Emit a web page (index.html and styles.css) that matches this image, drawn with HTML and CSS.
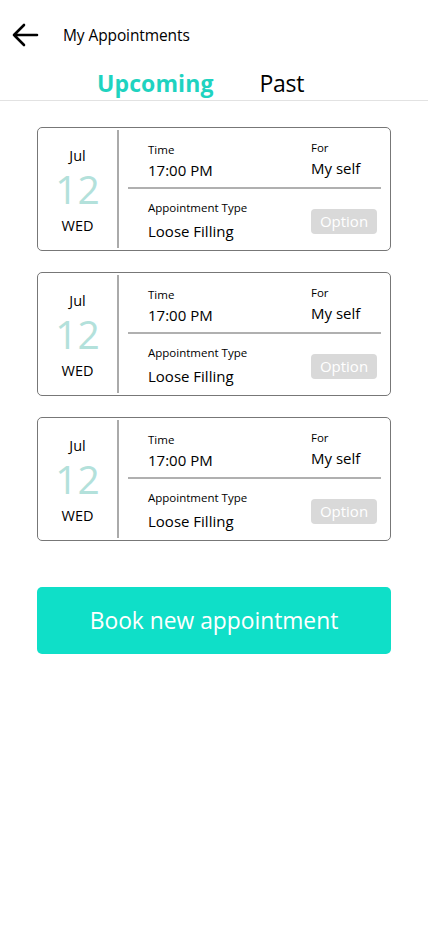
FILE: index.html
```html
<!DOCTYPE html>
<html lang="en">
<head>
<meta charset="utf-8">
<title>My Appointments</title>
<link rel="stylesheet" href="styles.css">
</head>
<body>
<header class="topbar">
  <svg class="back" width="28" height="24" viewBox="0 0 28 24"><path d="M13 2 L3 12 L13 22 M3 12 H26" fill="none" stroke="#000" stroke-width="2.6" stroke-linecap="round" stroke-linejoin="round"/></svg>
  <span class="title">My Appointments</span>
</header>
<nav class="tabs">
  <span class="tab active">Upcoming</span>
  <span class="tab">Past</span>
</nav>
<main class="list">
  <div class="card">
    <div class="date"><span class="mon">Jul</span><span class="day">12</span><span class="dow">WED</span></div>
    <div class="vline"></div>
    <div class="info">
      <div class="row top">
        <div class="cell"><span class="lbl">Time</span><span class="val">17:00 PM</span></div>
        <div class="cell side"><span class="lbl">For</span><span class="val">My self</span></div>
      </div>
      <div class="row bottom">
        <div class="cell"><span class="lbl">Appointment Type</span><span class="val">Loose Filling</span></div>
        <div class="cell side"><span class="opt">Option</span></div>
      </div>
    </div>
  </div>
  <div class="card">
    <div class="date"><span class="mon">Jul</span><span class="day">12</span><span class="dow">WED</span></div>
    <div class="vline"></div>
    <div class="info">
      <div class="row top">
        <div class="cell"><span class="lbl">Time</span><span class="val">17:00 PM</span></div>
        <div class="cell side"><span class="lbl">For</span><span class="val">My self</span></div>
      </div>
      <div class="row bottom">
        <div class="cell"><span class="lbl">Appointment Type</span><span class="val">Loose Filling</span></div>
        <div class="cell side"><span class="opt">Option</span></div>
      </div>
    </div>
  </div>
  <div class="card">
    <div class="date"><span class="mon">Jul</span><span class="day">12</span><span class="dow">WED</span></div>
    <div class="vline"></div>
    <div class="info">
      <div class="row top">
        <div class="cell"><span class="lbl">Time</span><span class="val">17:00 PM</span></div>
        <div class="cell side"><span class="lbl">For</span><span class="val">My self</span></div>
      </div>
      <div class="row bottom">
        <div class="cell"><span class="lbl">Appointment Type</span><span class="val">Loose Filling</span></div>
        <div class="cell side"><span class="opt">Option</span></div>
      </div>
    </div>
  </div>
  <button class="book">Book new appointment</button>
</main>
</body>
</html>
```
FILE: styles.css
```css
* { box-sizing: border-box; }
body {
  margin: 0;
  background: #fff;
  font-family: "Open Sans", "Noto Sans", sans-serif;
  color: #000;
}
.topbar {
  display: flex;
  align-items: center;
  height: 70px;
  padding-left: 11px;
}
.back { display: block; }
.title {
  margin-left: 24px;
  font-size: 15.5px;
  letter-spacing: -0.1px;
}
.tabs {
  display: flex;
  justify-content: flex-start;
  gap: 46px;
  height: 31px;
  align-items: center;
  border-bottom: 1px solid #e2e2e2;
  padding-left: 97px;
}
.tab {
  font-size: 23px;
  line-height: 31px;
  position: relative;
  top: -2px;
}
.tab.active {
  color: #1fd3c0;
  font-weight: 700;
  letter-spacing: 0.1px;
}
.tab + .tab { letter-spacing: -0.3px; }
.list {
  display: flex;
  flex-direction: column;
  gap: 21px;
  padding: 26px 37px 0 37px;
}
.card {
  display: flex;
  height: 124px;
  border: 1px solid #777;
  border-radius: 5px;
}
.date {
  width: 79px;
  display: flex;
  flex-direction: column;
  align-items: center;
  padding-top: 19px;
}
.mon, .dow { font-size: 14.5px; line-height: 18px; }
.day {
  font-size: 39px;
  line-height: 34px;
  color: #b3e1db;
  margin: 7px 0 11px;
}
.vline {
  width: 2px;
  background: #aaa;
  margin: 2px 0;
}
.info {
  flex: 1;
  display: flex;
  flex-direction: column;
  padding: 0 9px 0 9px;
}
.row {
  display: flex;
  padding-left: 20px;
}
.row.top {
  height: 61px;
  border-bottom: 2px solid #b0b0b0;
  padding-top: 14px;
}
.row.bottom { padding-top: 11px; }
.cell {
  flex: 1;
  display: flex;
  flex-direction: column;
}
.cell.side {
  flex: 0 0 70px;
}
.row.top .cell.side { margin-top: -2px; }
.lbl { font-size: 11.5px; line-height: 16px; }
.row.top .lbl { margin-bottom: 1px; }
.val { font-size: 15px; line-height: 22px; }
.row.bottom .lbl { margin-bottom: 4px; }
.opt {
  margin-top: 9px;
  width: 66px;
  height: 25px;
  background: #d9d9d9;
  color: #fff;
  border-radius: 4px;
  font-size: 15px;
  line-height: 25px;
  text-align: center;
}
.book {
  margin-top: 25px;
  height: 67px;
  width: 100%;
  border: none;
  border-radius: 5px;
  background: #0fdfc8;
  color: #fff;
  font-family: "Open Sans", "Noto Sans", sans-serif;
  font-size: 22.8px;
  padding: 0;
}
```
